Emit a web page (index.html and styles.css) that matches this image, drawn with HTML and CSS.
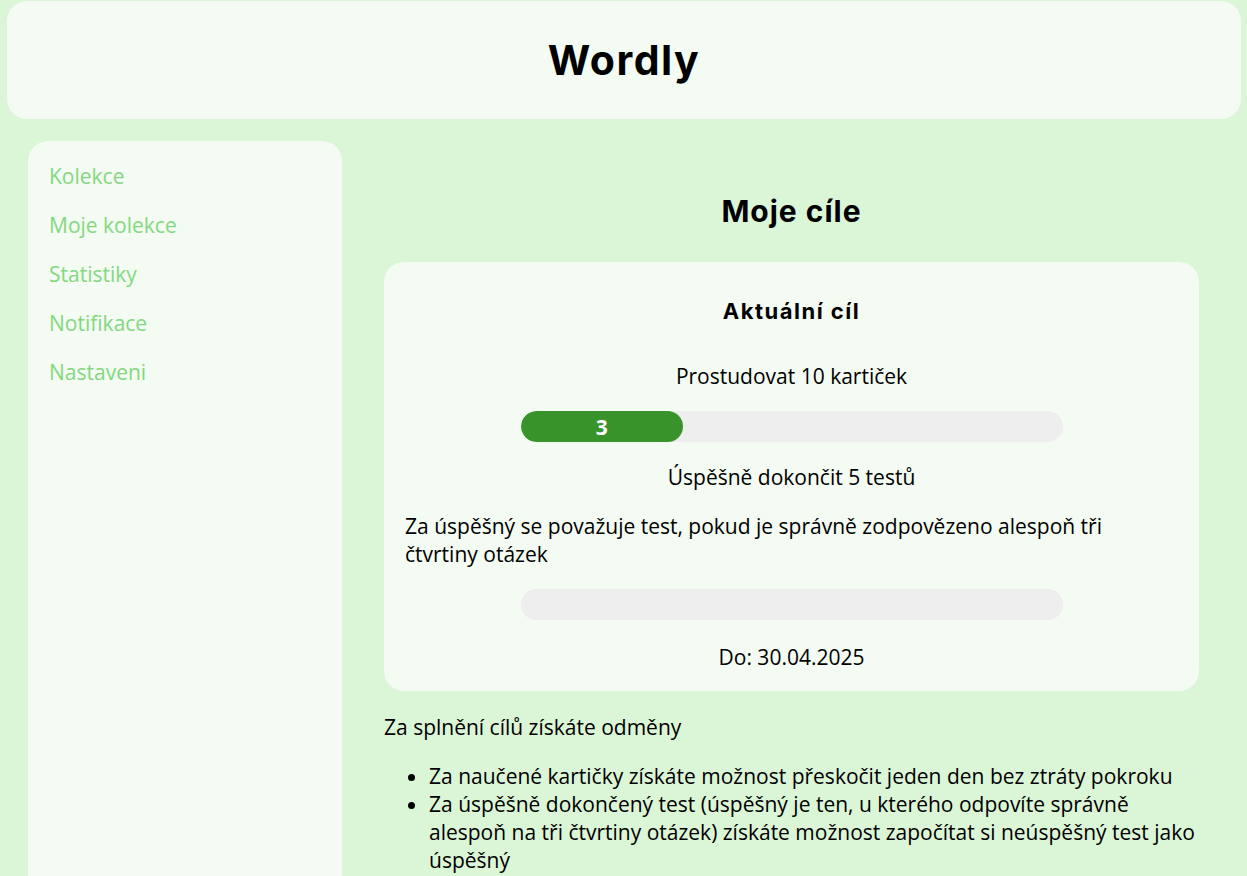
FILE: index.html
```html
<!DOCTYPE html>
<html lang="cs">
<head>
<meta charset="utf-8">
<title>Wordly</title>
<link rel="stylesheet" href="styles.css">
</head>
<body>
<header class="topbar"><h1 class="logo">Wordly</h1></header>
<div class="layout">
  <nav class="sidebar">
    <a class="nav-link" href="#">Kolekce</a>
    <a class="nav-link" href="#">Moje kolekce</a>
    <a class="nav-link" href="#">Statistiky</a>
    <a class="nav-link" href="#">Notifikace</a>
    <a class="nav-link" href="#">Nastaveni</a>
    <a class="nav-link logout" href="#">Odhlásit</a>
  </nav>
  <main class="main">
    <h2 class="page-title">Moje cíle</h2>
    <section class="card">
      <h3 class="card-title">Aktuální cíl</h3>
      <p class="goal">Prostudovat 10 kartiček</p>
      <div class="bar bar-first"><div class="bar-fill" style="width:30%">3</div></div>
      <p class="goal">Úspěšně dokončit 5 testů</p>
      <p class="note">Za úspěšný se považuje test, pokud je správně zodpovězeno alespoň tři čtvrtiny otázek</p>
      <div class="bar"></div>
      <p class="goal deadline">Do: 30.04.2025</p>
    </section>
    <p class="rewards">Za splnění cílů získáte odměny</p>
    <ul class="reward-list">
      <li>Za naučené kartičky získáte možnost přeskočit jeden den bez ztráty pokroku</li>
      <li>Za úspěšně dokončený test (úspěšný je ten, u kterého odpovíte správně alespoň na tři čtvrtiny otázek) získáte možnost započítat si neúspěšný test jako úspěšný</li>
    </ul>
  </main>
</div>
</body>
</html>
```
FILE: styles.css
```css
html, body {
  margin: 0;
  padding: 0;
}
body {
  background: #dbf5d7;
  font-family: "Open Sans", "Noto Sans", sans-serif;
  font-size: 21px;
  color: #000;
  padding: 1px 6px 0 7px;
}
.topbar {
  background: #f3fbf2;
  border-radius: 20px;
  height: 118px;
  display: flex;
  align-items: center;
  justify-content: center;
}
.logo {
  margin: 0;
  font-family: "Inter", "Open Sans", sans-serif;
  font-weight: 700;
  font-size: 41px;
  letter-spacing: 1.5px;
}
.layout {
  display: flex;
  margin-top: 22px;
  padding-left: 21px;
}
.sidebar {
  background: #f3fbf2;
  border-radius: 20px 20px 0 0;
  width: 314px;
  flex: none;
  height: 760px;
  box-sizing: border-box;
  padding: 21px 21px 0;
  display: flex;
  flex-direction: column;
  gap: 21px;
}
.nav-link {
  color: #83d87f;
  text-decoration: none;
  line-height: 28px;
}
.logout {
  margin-top: auto;
  transform: translateY(12px);
}
.main {
  flex: 1;
  padding: 0 42px;
}
.page-title {
  margin: 34px 0 15px;
  text-align: center;
  font-family: "Inter", "Open Sans", sans-serif;
  font-weight: 700;
  font-size: 30px;
  letter-spacing: 1px;
  line-height: 72px;
  height: 72px;
}
.card {
  background: #f3fbf2;
  border-radius: 20px;
  padding: 32px 21px 20px;
}
.card-title {
  margin: 0 0 34px;
  text-align: center;
  font-family: "Inter", "Open Sans", sans-serif;
  font-weight: 700;
  font-size: 22px;
  letter-spacing: 1.5px;
  line-height: 34px;
}
.goal {
  margin: 0 0 21px;
  text-align: center;
  line-height: 28px;
}
.deadline {
  margin: 23px 0 0;
}
.note {
  margin: 0 0 21px;
  line-height: 28px;
}
.bar {
  width: 542px;
  height: 31px;
  margin: 0 auto 22px;
  background: #eeeeee;
  border-radius: 16px;
  overflow: hidden;
  display: flex;
}
.bar-first {
  margin-bottom: 21px;
}
.bar-fill {
  background: #38932b;
  border-radius: 16px;
  color: #fff;
  font-weight: 700;
  font-size: 21px;
  display: flex;
  align-items: center;
  justify-content: center;
}
.rewards {
  margin: 22px 0 21px;
  line-height: 28px;
}
.reward-list {
  margin: 0;
  padding-left: 45px;
  line-height: 28px;
}
```
